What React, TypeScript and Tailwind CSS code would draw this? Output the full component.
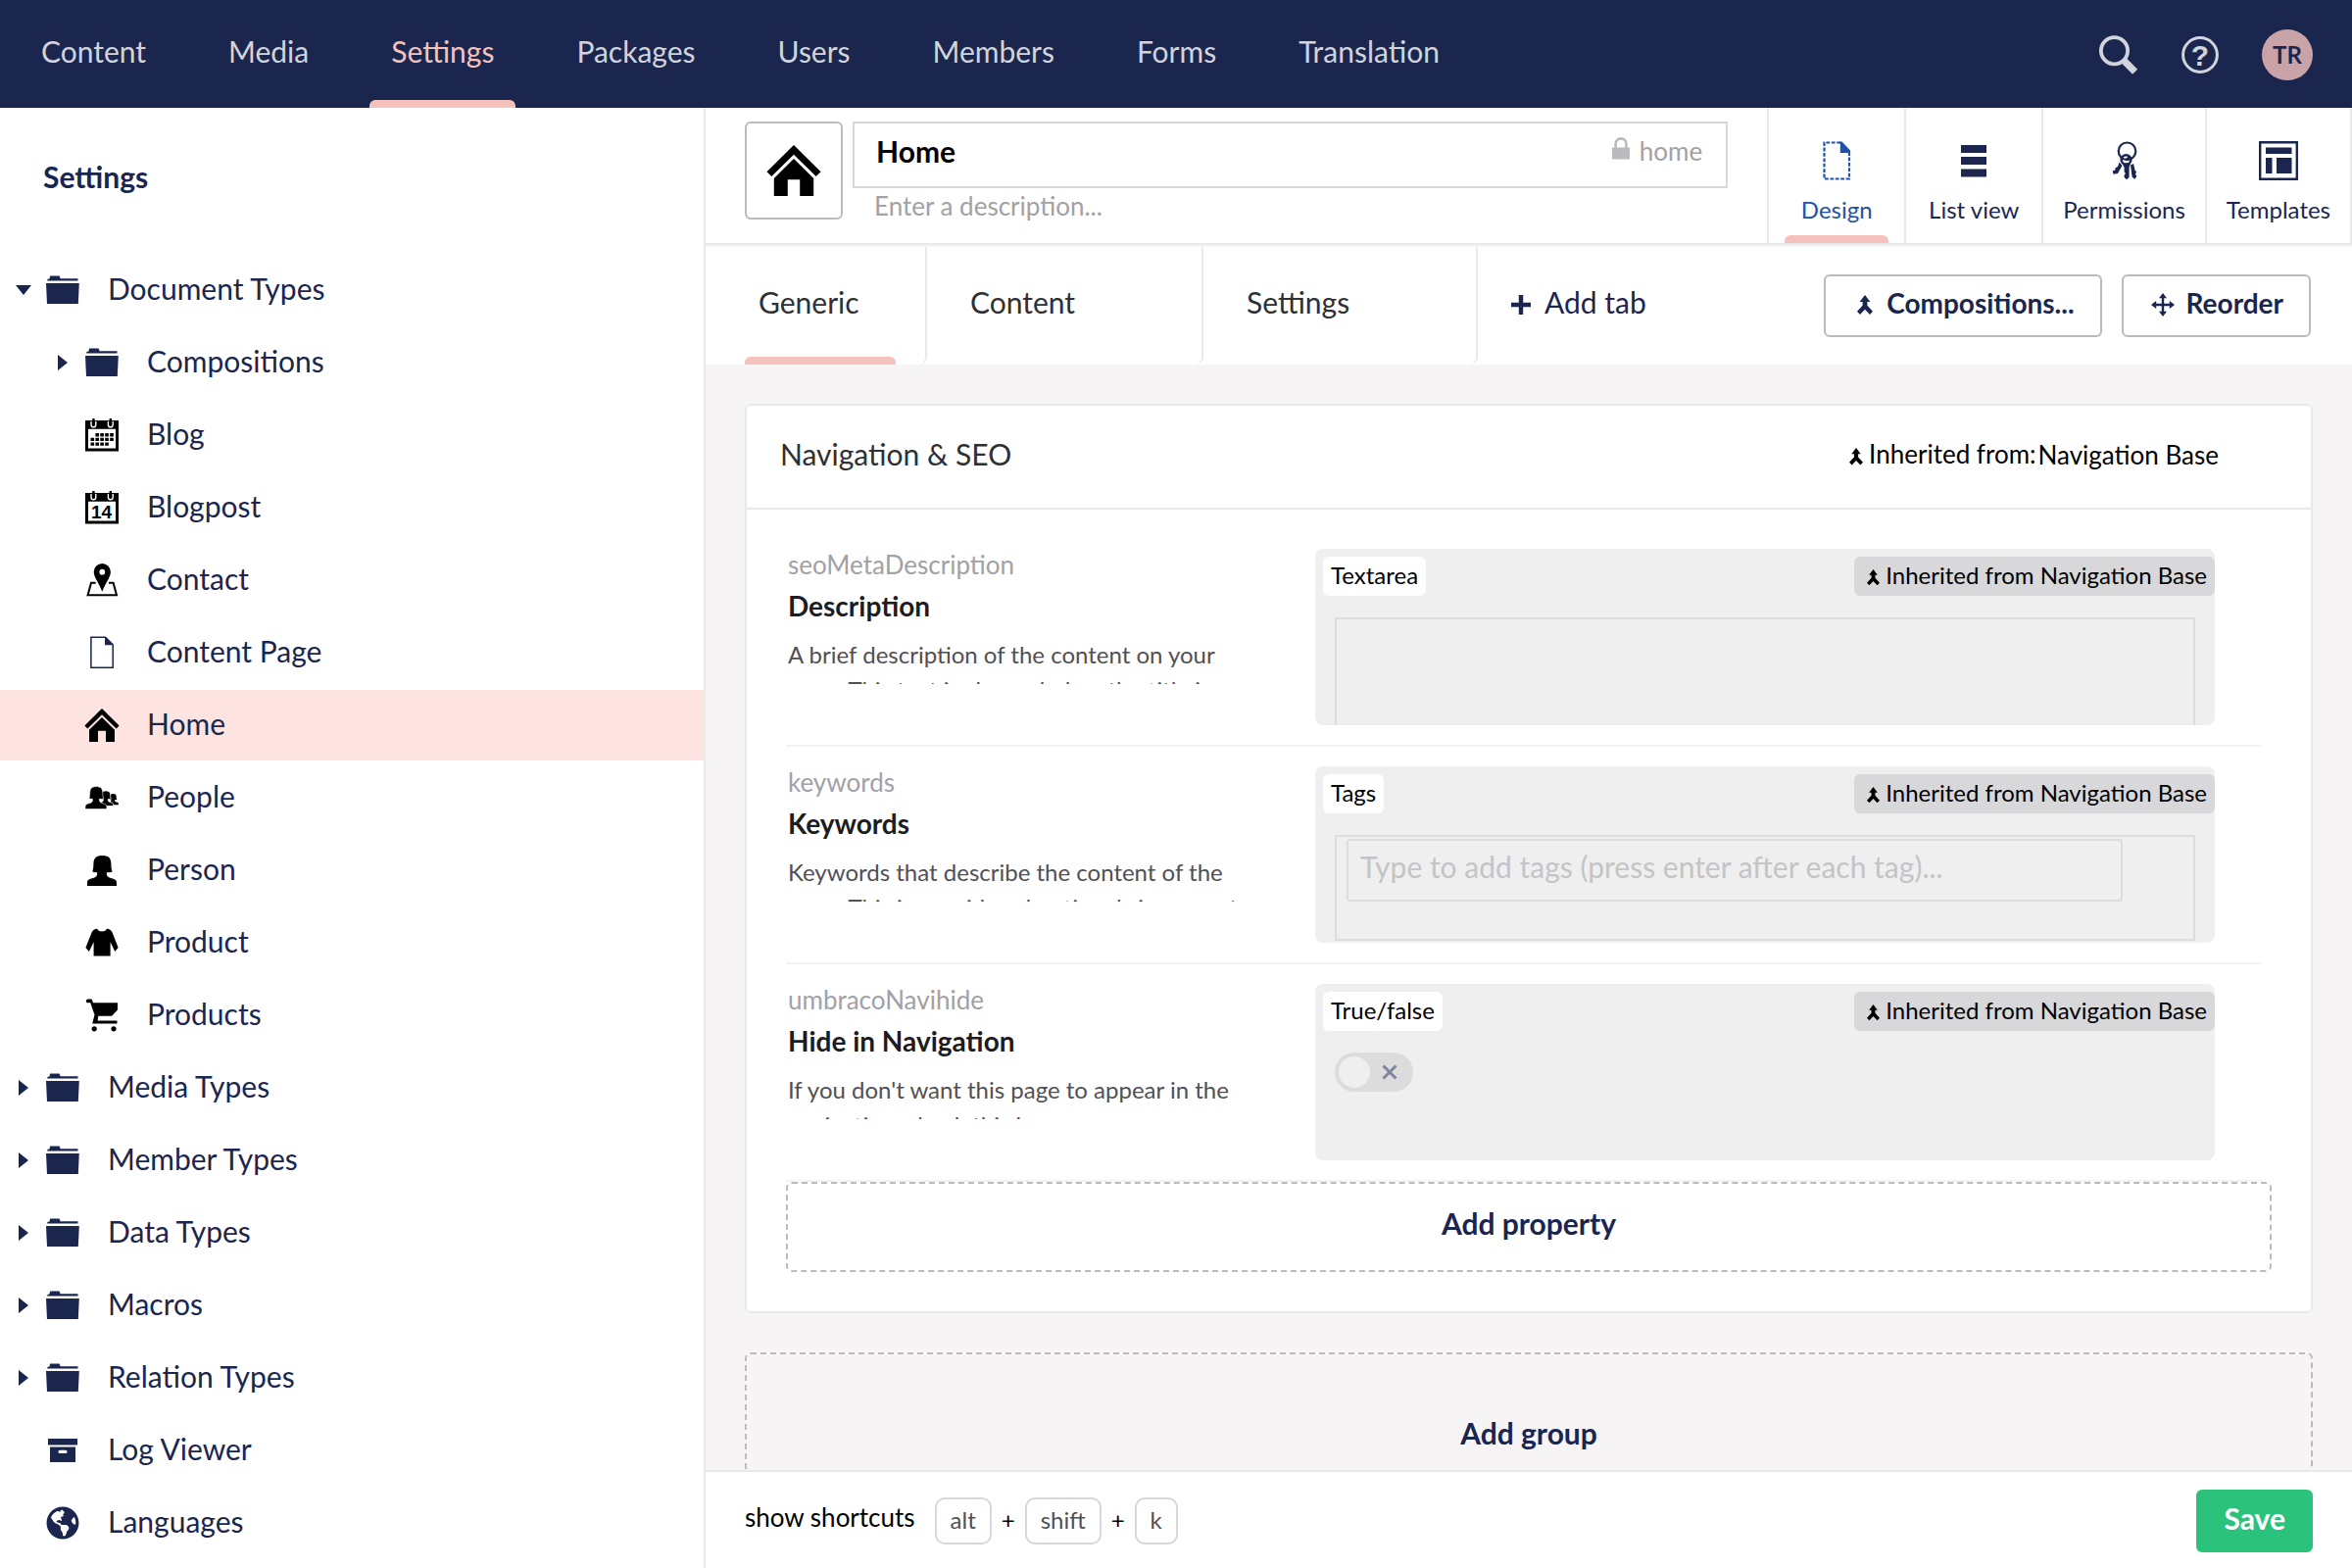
import React from "react";
import { FaGlobeAmericas } from "react-icons/fa";

type IconProps = { className?: string };

const HomeIcon = ({ className }: IconProps) => (
  <svg viewBox="0 0 36 34" className={className} fill="currentColor" aria-hidden="true">
    <path d="M18 0 35.7 17.6 32.6 20.6 18 6.2 3.4 20.6 .3 17.6Z" />
    <path d="M18 9 31 21.8V34H22V22.7H14V34H5V21.8Z" />
  </svg>
);

const FolderIcon = ({ className }: IconProps) => (
  <svg viewBox="0 0 34 29" className={className} fill="currentColor" aria-hidden="true">
    <path d="M1.3 5V3.4L3.4 3 4.2 0H13.6L14.6 2.8H32.5V5Z" />
    <path d="M0 7.4H33.8L32.8 28.4H1Z" />
  </svg>
);

const CalendarFrame = ({ children, className }: IconProps & { children: React.ReactNode }) => (
  <svg viewBox="0 0 34 34" className={className} fill="currentColor" aria-hidden="true">
    <path fillRule="evenodd" d="M0 2H34V33.4H0ZM3 10.8V30.4H31V10.8Z" />
    <path d="M6 3V6.4a2.4 2.4 0 0 0 4.8 0V3M23.4 3V6.4a2.4 2.4 0 0 0 4.8 0V3" fill="none" stroke="#fff" strokeWidth="1.4" />
    <path d="M7.2 0H9.6V6.2H7.2ZM24.6 0H27V6.2H24.6Z" />
    {children}
  </svg>
);

const CalendarIcon = ({ className }: IconProps) => (
  <CalendarFrame className={className}>
    <path d="M10.4 15h3.6v3.4h-3.6zM15.3 15h3.6v3.4h-3.6zM20.2 15h3.6v3.4h-3.6zM25.2 15h3.6v3.4h-3.6zM5.5 19.7h3.6v3.4H5.5zM10.4 19.7h3.6v3.4h-3.6zM15.3 19.7h3.6v3.4h-3.6zM20.2 19.7h3.6v3.4h-3.6zM25.2 19.7h3.6v3.4h-3.6zM5.5 24.4h3.6v3.4H5.5zM10.4 24.4h3.6v3.4h-3.6zM15.3 24.4h3.6v3.4h-3.6zM20.2 24.4h3.6v3.4h-3.6z" />
  </CalendarFrame>
);

const CalendarDayIcon = ({ className }: IconProps) => (
  <CalendarFrame className={className}>
    <text x="16.6" y="28.2" textAnchor="middle" fontSize="19" fontWeight="700" fontFamily="Liberation Sans, sans-serif">14</text>
  </CalendarFrame>
);

const MapPinIcon = ({ className }: IconProps) => (
  <svg viewBox="0 0 34 34" className={className} fill="currentColor" aria-hidden="true">
    <path fillRule="evenodd" d="M17.3 0a8.6 8.6 0 0 1 8.6 8.6c0 5.4-5.2 11.4-8.6 20.2C13.900 20 8.700 14 8.700 8.600A8.600 8.600 0 0 1 17.300 0Zm0 5.800a2.900 2.900 0 1 0 0 5.800 2.900 2.900 0 0 0 0-5.800Z" />
    <path d="M10.600 19.800H6L2.600 32.300H32L28.600 19.800H24" fill="none" stroke="currentColor" strokeWidth="2" />
  </svg>
);

const DocumentIcon = ({ className }: IconProps) => (
  <svg viewBox="0 0 34 34" className={className} fill="currentColor" aria-hidden="true">
    <path d="M5.900 1.200H20.600L28.200 8.800V32.200H5.900Z" fill="none" stroke="currentColor" strokeWidth="1.500" />
    <path d="M20 1V9.200H28.400Z" />
  </svg>
);

const PersonShape = "M15 .2c1.200-.5 2.800-.3 4 .3 3.300.2 5 2.900 5.300 6.600.2 3.500 0 6.400 1.300 9.300-1.600.9-3.700.9-5.700.6v2.800c.6 2 2.600 2.900 5 3.500 3.100.9 5.100 1.500 5.100 4.400V31H0v-3.300c0-2.900 2-3.500 5.100-4.400 2.400-.6 4.400-1.500 5-3.500V17c-1.600.4-3.400.2-4.800-.8C6.600 13.300 6.200 10.300 6.500 7 6.900 2.800 9.300.4 12.300.4c1-.5 1.900-.5 2.700-.2Z";

const PersonIcon = ({ className }: IconProps) => (
  <svg viewBox="-2 -2 34 34" className={className} fill="currentColor" aria-hidden="true">
    <path d={PersonShape} />
  </svg>
);

const PeopleIcon = ({ className }: IconProps) => (
  <svg viewBox="0 0 34 34" className={className} fill="currentColor" aria-hidden="true">
    <g transform="translate(22.500 13) scale(.38 .36)"><path d={PersonShape} /></g>
    <g transform="translate(13 10) scale(.52 .5)" stroke="#fff" strokeWidth="1.500"><path d={PersonShape} /></g>
    <g transform="translate(0 5.600) scale(.73 .74)" stroke="#fff" strokeWidth=".8"><path d={PersonShape} /></g>
  </svg>
);

const ShirtIcon = ({ className }: IconProps) => (
  <svg viewBox="0 0 34 34" className={className} fill="currentColor" aria-hidden="true">
    <path d="M10.600 3c1.200-.4 1.900 0 2.500 1 1 1.300 2.200 1.400 4 1.400s3-.1 4-1.400c.6-1 1.300-1.400 2.500-1 2.800.8 3.500 2.200 4.500 4.800L33.600 22l-3.300 4-4.700-9.800V30.600H8.600V16.200L3.900 26 .4 22 6.100 7.800C7.100 5.200 7.800 3.800 10.600 3Z" />
  </svg>
);

const CartIcon = ({ className }: IconProps) => (
  <svg viewBox="0 0 34 34" className={className} fill="currentColor" aria-hidden="true">
    <path d="M1 1.500 2.200.4H6.600L8 4.300H33V11.500L27 17.700H13.300L12.600 22.600H32.500V25.600H7.200L9.500 16.500 5.200 4.200H1.800L1 3.300Z" />
    <circle cx="9.200" cy="30.800" r="2.600" />
    <circle cx="29" cy="30.800" r="2.600" />
  </svg>
);

const ArchiveIcon = ({ className }: IconProps) => (
  <svg viewBox="0 0 34 34" className={className} fill="currentColor" aria-hidden="true">
    <path d="M2 5H32V11.500H2Z" />
    <path fillRule="evenodd" d="M4 13.500H30V29H4ZM14 16.800A1.500 1.500 0 0 0 14 19.900H20A1.500 1.500 0 0 0 20 16.800Z" />
  </svg>
);

const GlobeIcon = ({ className }: IconProps) => <FaGlobeAmericas className={className} aria-hidden="true" />;

const MergeIcon = ({ className }: IconProps) => (
  <svg viewBox="0 0 16 20" className={className} fill="currentColor" aria-hidden="true">
    <path d="M8 0 13.400 7H10.400V10.800L16 16.800 13 20 8 14.800 3 20 0 16.800 5.600 10.800V7H2.600Z" />
  </svg>
);

const MoveIcon = ({ className }: IconProps) => (
  <svg viewBox="0 0 24 24" className={className} fill="currentColor" aria-hidden="true">
    <path d="M12 0 16 5.200H13.200V10.800H18.800V8L24 12 18.800 16V13.200H13.200V18.800H16L12 24 8 18.800H10.800V13.200H5.200V16L0 12 5.200 8V10.800H10.800V5.200H8Z" />
  </svg>
);

const PlusIcon = ({ className }: IconProps) => (
  <svg viewBox="0 0 20 20" className={className} fill="currentColor" aria-hidden="true">
    <path d="M7.800 0H12.200V7.800H20V12.200H12.200V20H7.800V12.200H0V7.800H7.800Z" />
  </svg>
);

const LockIcon = ({ className }: IconProps) => (
  <svg viewBox="0 0 18 23" className={className} fill="currentColor" aria-hidden="true">
    <path d="M0 10.500H18V21.500Q18 22.500 17 22.500H1Q0 22.500 0 21.500Z" />
    <path d="M3.600 11V7C3.600 3.500 6 1.400 9 1.400S14.400 3.500 14.400 7V11" fill="none" stroke="currentColor" strokeWidth="2.600" />
  </svg>
);

const SearchIcon = ({ className }: IconProps) => (
  <svg viewBox="0 0 40 40" className={className} fill="none" stroke="currentColor" aria-hidden="true">
    <circle cx="15.500" cy="15.800" r="13.600" strokeWidth="3.800" />
    <path d="M25 25.500 36.600 37.300" strokeWidth="7.200" />
  </svg>
);

const HelpIcon = ({ className }: IconProps) => (
  <svg viewBox="0 0 38 38" className={className} aria-hidden="true">
    <circle cx="19" cy="19" r="17.400" fill="none" stroke="currentColor" strokeWidth="3" />
    <text x="19" y="29.500" textAnchor="middle" fontSize="30" fontWeight="700" fill="currentColor" fontFamily="Liberation Sans, sans-serif">?</text>
  </svg>
);

const DesignIcon = ({ className }: IconProps) => (
  <svg viewBox="0 0 40 40" className={className} fill="currentColor" aria-hidden="true">
    <path d="M24 1.500H7.500V38.500H33V10.500" fill="none" stroke="currentColor" strokeWidth="2.200" strokeDasharray="3.800 1.600" />
    <path d="M23 .5H25.500L34 9.500V12H23.800V2.500H23Z" />
  </svg>
);

const ListIcon = ({ className }: IconProps) => (
  <svg viewBox="0 0 40 40" className={className} fill="currentColor" aria-hidden="true">
    <path d="M7 4H33V12H7ZM7 16H33V24H7ZM7 28.500H33V36.500H7Z" />
  </svg>
);

const KeysIcon = ({ className }: IconProps) => (
  <svg viewBox="0 0 40 40" className={className} fill="none" stroke="currentColor" aria-hidden="true">
    <circle cx="22.500" cy="10.300" r="8.800" strokeWidth="2.200" />
    <circle cx="21.500" cy="19" r="4.800" strokeWidth="2.600" />
    <path d="M21.500 19 25.500 16" strokeWidth="2.400" />
    <path d="M17.500 22.500H26L24.600 27V37L22 39.300 19.600 37V34.500L21 33 19.600 31.500V27Z" fill="currentColor" stroke="none" />
    <path d="M14.500 21.500 17.500 25 13 33 8.600 33.800 7.600 30.500 10.300 29.500 10.600 27.200 13 26Z" fill="currentColor" stroke="none" />
    <path d="M26 24.500 29 23 30.500 29.500 32 31.500 31 33.500 32.300 36 30.200 38.800 27.600 36.500Z" fill="currentColor" stroke="none" />
  </svg>
);

const TemplateIcon = ({ className }: IconProps) => (
  <svg viewBox="0 0 40 40" className={className} fill="currentColor" aria-hidden="true">
    <path d="M1.200 1.200H38.800V38.800H1.200Z" fill="none" stroke="currentColor" strokeWidth="2.400" />
    <path d="M7 6.500H33.500V13H7ZM7 17H13.500V33H7ZM18 17H33.500V33H18Z" />
  </svg>
);

const sections = ["Content", "Media", "Settings", "Packages", "Users", "Members", "Forms", "Translation"];

type TreeItem = {
  label: string;
  icon: React.ComponentType<IconProps>;
  level: 0 | 1;
  arrow?: "down" | "right";
  dark?: boolean;
  active?: boolean;
};

const tree: TreeItem[] = [
  { label: "Document Types", icon: FolderIcon, level: 0, arrow: "down" },
  { label: "Compositions", icon: FolderIcon, level: 1, arrow: "right" },
  { label: "Blog", icon: CalendarIcon, level: 1, dark: true },
  { label: "Blogpost", icon: CalendarDayIcon, level: 1, dark: true },
  { label: "Contact", icon: MapPinIcon, level: 1, dark: true },
  { label: "Content Page", icon: DocumentIcon, level: 1 },
  { label: "Home", icon: HomeIcon, level: 1, dark: true, active: true },
  { label: "People", icon: PeopleIcon, level: 1, dark: true },
  { label: "Person", icon: PersonIcon, level: 1, dark: true },
  { label: "Product", icon: ShirtIcon, level: 1, dark: true },
  { label: "Products", icon: CartIcon, level: 1, dark: true },
  { label: "Media Types", icon: FolderIcon, level: 0, arrow: "right" },
  { label: "Member Types", icon: FolderIcon, level: 0, arrow: "right" },
  { label: "Data Types", icon: FolderIcon, level: 0, arrow: "right" },
  { label: "Macros", icon: FolderIcon, level: 0, arrow: "right" },
  { label: "Relation Types", icon: FolderIcon, level: 0, arrow: "right" },
  { label: "Log Viewer", icon: ArchiveIcon, level: 0 },
  { label: "Languages", icon: GlobeIcon, level: 0 },
];

function TopBar() {
  return (
    <header className="flex h-[110px] shrink-0 items-stretch justify-between bg-[#1b264f]">
      <nav className="flex" aria-label="Sections">
        {sections.map((name) => {
          const active = name === "Settings";
          return (
            <a
              key={name}
              href="#"
              className={
                "relative flex items-center px-[42px] pb-1.5 text-[30px] leading-9 " +
                (active ? "text-[#f5c1bc]" : "text-[#d1d4dc]")
              }
            >
              {name}
              {active && <span className="absolute inset-x-5 bottom-0 h-2 rounded-t-md bg-[#f5c1bc]" />}
            </a>
          );
        })}
      </nav>
      <div className="flex items-center gap-11 pt-0.5 pr-10 text-[#d1d4dc]">
        <button type="button" aria-label="Search">
          <SearchIcon className="size-10" />
        </button>
        <button type="button" aria-label="Help">
          <HelpIcon className="size-[38px]" />
        </button>
        <button
          type="button"
          className="flex size-[52px] items-center justify-center rounded-full bg-[#c9a3a7] text-2xl font-bold text-[#1b264f]"
        >
          TR
        </button>
      </div>
    </header>
  );
}

function Arrow({ dir }: { dir?: "down" | "right" }) {
  if (!dir) return null;
  return (
    <svg viewBox="0 0 16 16" className="size-4" fill="currentColor" aria-hidden="true">
      {dir === "down" ? <path d="M0 3H16L8 13Z" /> : <path d="M3 0 13 8 3 16Z" />}
    </svg>
  );
}

function Sidebar() {
  return (
    <aside className="w-[720px] shrink-0 overflow-hidden border-r-2 border-[#e9e9eb] bg-white text-[#1b264f]">
      <h2 className="flex h-[140px] items-center px-11 text-[30px] leading-9 font-bold">Settings</h2>
      <ul className="flex flex-col gap-0.5 pt-2.5">
        {tree.map(({ label, icon: Icon, level, arrow, dark, active }) => (
          <li key={label}>
            <a
              href="#"
              className={
                "flex h-[72px] items-center " +
                (level === 1 ? "pl-14 " : "pl-4 ") +
                (active ? "bg-[#fee4e1]" : "")
              }
            >
              <span className="flex w-[30px] items-center justify-start">
                <Arrow dir={arrow} />
              </span>
              <span className={"flex w-[36px] justify-center " + (dark ? "text-black" : "")}>
                <Icon className={label === "Home" ? "w-9" : "w-[34px] h-[34px]"} />
              </span>
              <span className="pb-1 pl-7 text-[30px] leading-9">{label}</span>
            </a>
          </li>
        ))}
      </ul>
    </aside>
  );
}

const apps = [
  { label: "Design", icon: DesignIcon, active: true },
  { label: "List view", icon: ListIcon },
  { label: "Permissions", icon: KeysIcon },
  { label: "Templates", icon: TemplateIcon },
];

function EditorHeader() {
  return (
    <div className="flex h-[140px] shrink-0 border-b-2 border-[#e9e9eb] bg-white pl-10">
      <button
        type="button"
        aria-label="Change icon"
        className="mt-3.5 flex size-[100px] shrink-0 items-center justify-center rounded-md border-2 border-[#bbbabf] text-black"
      >
        <HomeIcon className="w-14" />
      </button>
      <div className="mt-3.5 mr-10 ml-2.5 flex min-w-0 flex-1 flex-col">
        <div className="flex h-[68px] items-center border-2 border-[#d8d7d9] pr-6 pb-2 pl-[22px]">
          <input
            aria-label="Name"
            defaultValue="Home"
            className="min-w-0 flex-1 text-[30px] leading-9 font-bold text-black outline-none"
          />
          <button type="button" className="flex items-center gap-2.5 text-[26px] leading-8 text-[#a2a1a6]">
            <LockIcon className="mb-1.5 w-[18px] text-[#bbbabf]" />
            home
          </button>
        </div>
        <input
          aria-label="Description"
          placeholder="Enter a description..."
          className="h-9 pl-[22px] text-[26px] leading-8 outline-none placeholder:text-[#a2a1a6]"
        />
      </div>
      <nav className="flex shrink-0 border-r-2 border-[#e9e9eb]" aria-label="Apps">
        {apps.map(({ label, icon: Icon, active }) => (
          <button
            key={label}
            type="button"
            className={
              "relative flex min-w-[140px] flex-col items-center border-l-2 border-[#e9e9eb] px-5 pt-[34px] " +
              (active ? "text-[#2152a3]" : "text-[#1b264f]")
            }
          >
            <Icon className="size-10" />
            <span className="mt-3.5 text-2xl leading-8">{label}</span>
            {active && <span className="absolute inset-x-4 bottom-0 h-2 rounded-t-md bg-[#f5c1bc]" />}
          </button>
        ))}
      </nav>
    </div>
  );
}

function TabBar() {
  const outlined =
    "flex h-16 items-center rounded-md border-2 border-[#bbbabf] pb-1.5 pr-[26px] text-[28px] leading-9 font-bold text-[#1b264f]";
  const tab = "relative flex items-center rounded-br-lg border-r-2 border-[#e9e9eb] pb-2 text-[30px] leading-9 text-[#303033]";
  return (
    <div className="flex h-[122px] shrink-0 justify-between border-t-2 border-[#f5f4f5] bg-white pr-[42px]">
      <div className="flex" role="tablist">
        <button type="button" role="tab" aria-selected="true" className={tab + " w-[226px] pl-[54px]"}>
          Generic
          <span className="absolute right-[30px] bottom-0 left-10 h-2 rounded-t-md bg-[#f5c1bc]" />
        </button>
        <button type="button" role="tab" aria-selected="false" className={tab + " w-[282px] pl-11"}>
          Content
        </button>
        <button type="button" role="tab" aria-selected="false" className={tab + " w-[280px] pl-11"}>
          Settings
        </button>
        <button type="button" className="flex items-center gap-3.5 pb-2 pl-[34px] text-[30px] leading-9 text-[#1b264f]">
          <PlusIcon className="mt-1.5 size-5" />
          Add tab
        </button>
      </div>
      <div className="flex items-center gap-5">
        <button type="button" className={outlined + " gap-3.5 pl-8"}>
          <MergeIcon className="mt-1 w-4" />
          Compositions...
        </button>
        <button type="button" className={outlined + " gap-3 pl-7"}>
          <MoveIcon className="mt-1 size-6" />
          Reorder
        </button>
      </div>
    </div>
  );
}

type PropertyProps = {
  id: string;
  alias: string;
  name: string;
  description: string;
  editor: string;
  children: React.ReactNode;
};

function Property({ id, alias, name, description, editor, children }: PropertyProps) {
  return (
    <div className="mr-[50px] ml-10 flex border-b-2 border-[#f3f3f5] py-5">
      <div className="w-[540px] shrink-0 pl-0.5">
        <div className="text-[26px] leading-8 text-[#a2a1a6]">{alias}</div>
        <label htmlFor={id} className="mt-2 block text-[28px] leading-9 font-bold text-[#1d1c1f]">
          {name}
        </label>
        <p className="mt-3.5 h-12 w-[460px] overflow-hidden text-2xl leading-9 text-[#515054]">{description}</p>
      </div>
      <div className="mr-12 h-[180px] min-w-0 flex-1 overflow-hidden rounded-lg bg-[#efefef] pt-2">
        <div className="flex justify-between pl-2 text-2xl leading-8 text-black">
          <span className="flex h-10 items-center rounded-md bg-white px-2 pb-0.5">{editor}</span>
          <span className="flex h-10 items-center gap-1.5 rounded-md bg-[#d8d7d9] pr-2 pb-0.5 pl-[13px]">
            <MergeIcon className="mt-1 w-[13px]" />
            Inherited from Navigation Base
          </span>
        </div>
        <div className="mx-5 mt-[22px]">{children}</div>
      </div>
    </div>
  );
}

function Content() {
  return (
    <main className="min-h-0 flex-1 overflow-hidden bg-[#f6f4f5] px-10 pt-10">
      <section className="rounded-md border-2 border-[#e9e9eb] bg-white">
        <div className="flex h-[106px] items-center justify-between border-b-2 border-[#e9e9eb] pr-[94px] pb-1.5 pl-[34px]">
          <h3 className="text-[30px] leading-9 text-[#303033]">Navigation &amp; SEO</h3>
          <div className="flex items-center gap-0.5 text-[26px] leading-8 text-black">
            <MergeIcon className="mt-1.5 mr-1 w-3.5" />
            <span>Inherited from:</span>
            <a href="#" className="pt-0.5">Navigation Base</a>
          </div>
        </div>
        <div className="pt-5 pb-10">
          <Property
            id="seoMetaDescription"
            alias="seoMetaDescription"
            name="Description"
            editor="Textarea"
            description="A brief description of the content on your page. This text is shown below the title in a google search result and also used for Social Sharing Cards."
          >
            <textarea id="seoMetaDescription" disabled className="block h-[160px] w-full resize-none border-2 border-[#dcdcdd]" />
          </Property>
          <Property
            id="keywords"
            alias="keywords"
            name="Keywords"
            editor="Tags"
            description="Keywords that describe the content of the page. This is considered optional since most modern search engines don't use this anymore."
          >
            <div className="h-[108px] border-2 border-[#dcdcdd] pt-0.5 pr-[72px] pl-2.5">
              <input
                id="keywords"
                disabled
                placeholder="Type to add tags (press enter after each tag)..."
                className="block h-16 w-full rounded-sm border-2 border-[#dcdcdd] px-3 pb-2 text-[30px] leading-9 placeholder:text-[#c4c4c7]"
              />
            </div>
          </Property>
          <Property
            id="umbracoNavihide"
            alias="umbracoNavihide"
            name="Hide in Navigation"
            editor="True/false"
            description="If you don't want this page to appear in the navigation, check this box."
          >
            <div className="relative h-10 w-20">
              <input id="umbracoNavihide" type="checkbox" disabled className="block h-10 w-20 appearance-none rounded-full bg-[#dcdcdd]" />
              <span className="absolute top-1 left-1 size-8 rounded-full bg-[#efefef]" />
              <svg viewBox="0 0 16 16" className="absolute top-3 right-4 size-4 text-[#7f84a0]" stroke="currentColor" strokeWidth="3" aria-hidden="true">
                <path d="M1.500 1.500 14.500 14.500M14.500 1.500 1.500 14.500" />
              </svg>
            </div>
          </Property>
          <div className="px-10">
            <button
              type="button"
              className="flex h-[92px] w-full items-center justify-center rounded-md border-2 border-dashed border-[#bbbabf] pb-2 text-[30px] leading-9 font-bold text-[#1b264f]"
            >
              Add property
            </button>
          </div>
        </div>
      </section>
      <button
        type="button"
        className="mt-10 flex h-[164px] w-full items-center justify-center rounded-md border-2 border-dashed border-[#bbbabf] text-[30px] leading-9 font-bold text-[#1b264f]"
      >
        Add group
      </button>
    </main>
  );
}

function Footer() {
  const key = "flex h-12 items-center rounded-[10px] border-2 border-[#d8d7d9] px-[14px] pb-0.5 text-2xl leading-8 text-[#515054]";
  return (
    <footer className="flex h-[100px] shrink-0 items-center justify-between border-t-2 border-[#e9e9eb] bg-white px-10">
      <button type="button" className="flex items-center pt-0.5 text-black">
        <span className="pb-2 text-[26px] leading-8">show shortcuts</span>
        <span className="ml-5 flex items-center gap-2.5 text-2xl leading-8">
          <kbd className={key + " font-[Lato,sans-serif]"}>alt</kbd>
          <span className="pb-0.5">+</span>
          <kbd className={key + " font-[Lato,sans-serif]"}>shift</kbd>
          <span className="pb-0.5">+</span>
          <kbd className={key + " font-[Lato,sans-serif]"}>k</kbd>
        </span>
      </button>
      <button type="button" className="mt-0.5 flex h-16 items-center rounded-md bg-[#2bc37c] px-7 pb-1.5 text-[30px] leading-9 font-bold text-white">
        Save
      </button>
    </footer>
  );
}

export default function App() {
  return (
    <div className="flex h-screen flex-col overflow-hidden font-[Lato,sans-serif]">
      <TopBar />
      <div className="flex min-h-0 flex-1">
        <Sidebar />
        <div className="flex min-w-0 flex-1 flex-col">
          <EditorHeader />
          <TabBar />
          <Content />
          <Footer />
        </div>
      </div>
    </div>
  );
}
